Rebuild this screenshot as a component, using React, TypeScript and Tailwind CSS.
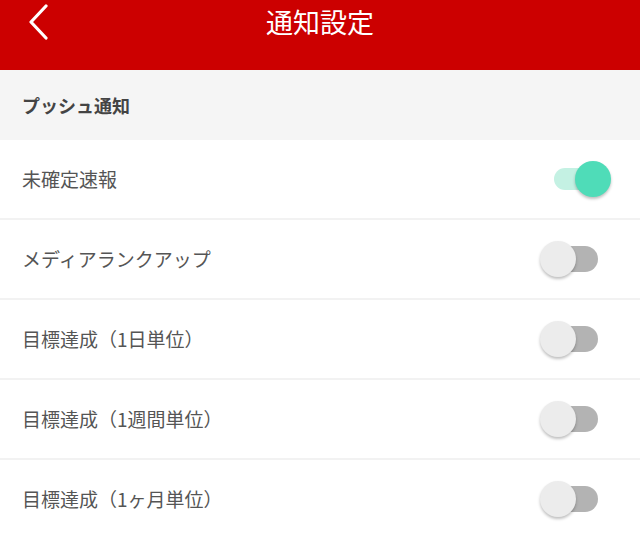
import { useState } from 'react';

const items = [
  { label: '未確定速報', on: true },
  { label: 'メディアランクアップ', on: false },
  { label: '目標達成（1日単位）', on: false },
  { label: '目標達成（1週間単位）', on: false },
  { label: '目標達成（1ヶ月単位）', on: false },
];

function Toggle({ on, onClick }: { on: boolean; onClick: () => void }) {
  return (
    <button onClick={onClick} className="relative w-[72px] h-[38px] shrink-0">
      <span
        className={
          on
            ? 'absolute left-[14px] top-[8px] w-[44px] h-[22px] rounded-full bg-[#c4f1e3]'
            : 'absolute left-[14px] top-[6px] w-[44px] h-[26px] rounded-full bg-[#b3b3b3]'
        }
      />
      <span
        className={
          on
            ? 'absolute left-[35px] top-[1px] w-[36px] h-[36px] rounded-full bg-[#4fdcb8] shadow-[0_2px_3px_rgba(0,0,0,0.25)]'
            : 'absolute left-[0px] top-[1px] w-[36px] h-[36px] rounded-full bg-[#ececec] shadow-[0_2px_3px_rgba(0,0,0,0.25)]'
        }
      />
    </button>
  );
}

export default function App() {
  const [state, setState] = useState(items.map((i) => i.on));

  return (
    <div className="w-[640px] h-[536px] overflow-hidden bg-white font-['Noto_Sans_CJK_JP','Noto_Sans',sans-serif]">
      <header className="relative h-[70px] bg-[#cc0000] flex justify-center">
        <button className="absolute left-[26px] top-[4px] text-white">
          <svg width="26" height="36" viewBox="0 0 26 36" fill="none">
            <path d="M20 2 L5 18 L20 34" stroke="white" strokeWidth="3.2" strokeLinecap="round" strokeLinejoin="round" />
          </svg>
        </button>
        <h1 className="mt-[3px] text-[27px] leading-[38px] text-white">通知設定</h1>
      </header>

      <div className="h-[70px] bg-[#f5f5f5] flex items-center px-[22px]">
        <span className="text-[18px] font-bold text-[#444]">プッシュ通知</span>
      </div>

      <ul>
        {items.map((item, i) => (
          <li
            key={item.label}
            className="h-[80px] flex items-center justify-between pl-[22px] pr-[28px] border-b-2 border-[#f2f2f2]"
          >
            <span className="text-[19px] text-[#555]">{item.label}</span>
            <Toggle
              on={state[i]}
              onClick={() => setState((s) => s.map((v, j) => (j === i ? !v : v)))}
            />
          </li>
        ))}
      </ul>
    </div>
  );
}
